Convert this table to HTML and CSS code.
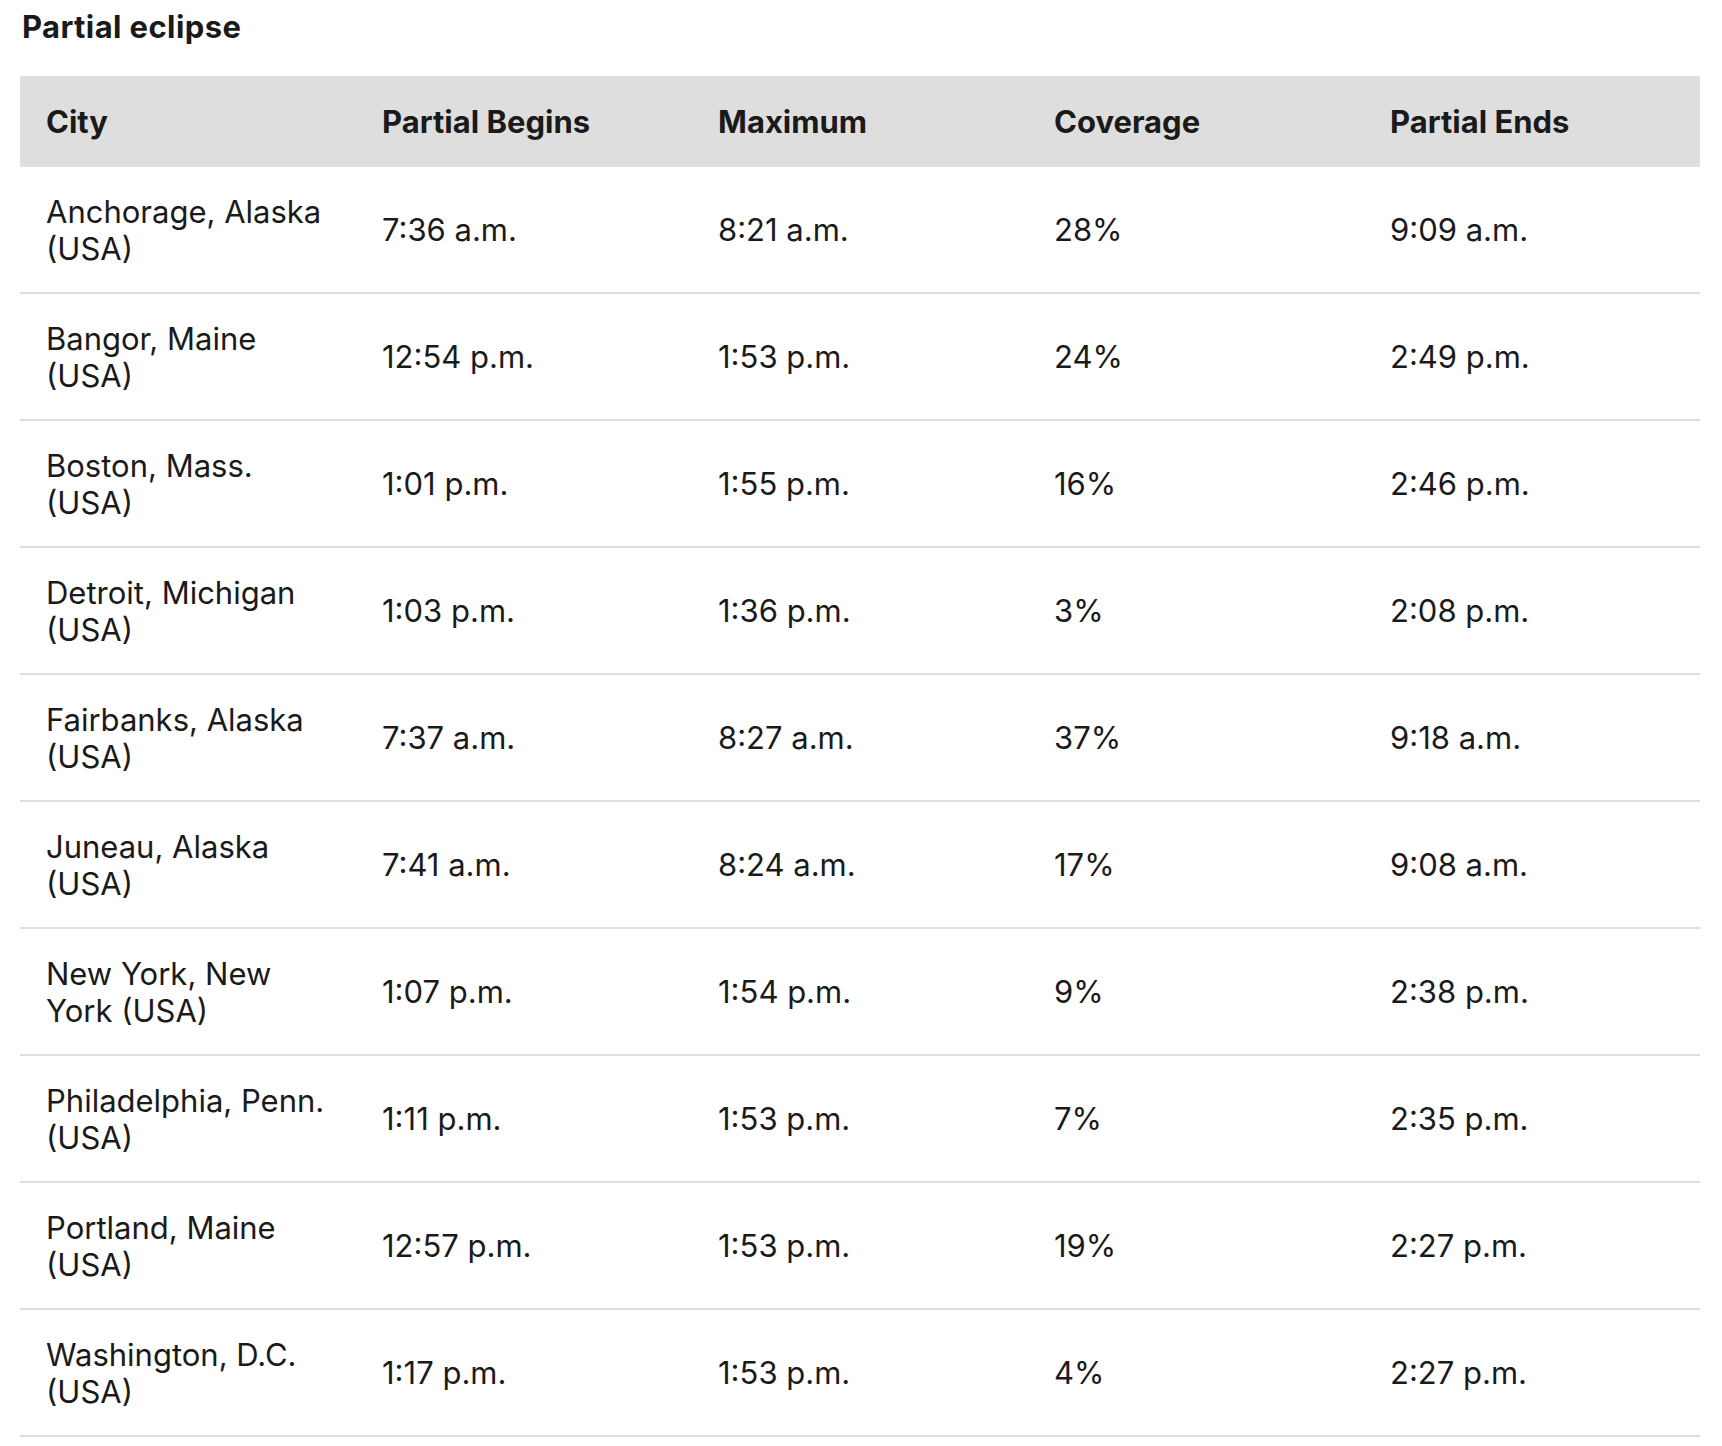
FILE: index.html
```html
<!DOCTYPE html>
<html lang="en">
<head>
<meta charset="utf-8">
<title>Partial eclipse</title>
<link rel="stylesheet" href="styles.css">
</head>
<body>
<main class="page">
  <h2 class="title">Partial eclipse</h2>
  <table class="eclipse">
    <thead>
      <tr>
        <th>City</th>
        <th>Partial Begins</th>
        <th>Maximum</th>
        <th>Coverage</th>
        <th>Partial Ends</th>
      </tr>
    </thead>
    <tbody>
      <tr><td>Anchorage, Alaska (USA)</td><td>7:36 a.m.</td><td>8:21 a.m.</td><td>28%</td><td>9:09 a.m.</td></tr>
      <tr><td>Bangor, Maine (USA)</td><td>12:54 p.m.</td><td>1:53 p.m.</td><td>24%</td><td>2:49 p.m.</td></tr>
      <tr><td>Boston, Mass. (USA)</td><td>1:01 p.m.</td><td>1:55 p.m.</td><td>16%</td><td>2:46 p.m.</td></tr>
      <tr><td>Detroit, Michigan (USA)</td><td>1:03 p.m.</td><td>1:36 p.m.</td><td>3%</td><td>2:08 p.m.</td></tr>
      <tr><td>Fairbanks, Alaska (USA)</td><td>7:37 a.m.</td><td>8:27 a.m.</td><td>37%</td><td>9:18 a.m.</td></tr>
      <tr><td>Juneau, Alaska (USA)</td><td>7:41 a.m.</td><td>8:24 a.m.</td><td>17%</td><td>9:08 a.m.</td></tr>
      <tr><td>New York, New York (USA)</td><td>1:07 p.m.</td><td>1:54 p.m.</td><td>9%</td><td>2:38 p.m.</td></tr>
      <tr><td>Philadelphia, Penn. (USA)</td><td>1:11 p.m.</td><td>1:53 p.m.</td><td>7%</td><td>2:35 p.m.</td></tr>
      <tr><td>Portland, Maine (USA)</td><td>12:57 p.m.</td><td>1:53 p.m.</td><td>19%</td><td>2:27 p.m.</td></tr>
      <tr><td>Washington, D.C. (USA)</td><td>1:17 p.m.</td><td>1:53 p.m.</td><td>4%</td><td>2:27 p.m.</td></tr>
    </tbody>
  </table>
</main>
</body>
</html>
```
FILE: styles.css
```css
html, body {
  margin: 0;
  padding: 0;
  background: #ffffff;
}

body {
  font-family: "Inter", "Liberation Sans", sans-serif;
  color: #1a1a1a;
}

.page {
  padding: 8px 20px 0 20px;
}

.title {
  margin: 0 0 31px 2px;
  font-size: 31px;
  line-height: 37px;
  font-weight: 700;
  letter-spacing: 0.4px;
}

.eclipse {
  width: 1680px;
  table-layout: fixed;
  border-collapse: collapse;
}

.eclipse th {
  background: #dedede;
  text-align: left;
  font-size: 31px;
  line-height: 37px;
  font-weight: 700;
  padding: 27px 26px;
}

.eclipse td {
  text-align: left;
  vertical-align: middle;
  font-size: 31px;
  line-height: 37px;
  font-weight: 400;
  padding: 25.5px 26px;
  border-bottom: 2px solid #dedede;
}
```
